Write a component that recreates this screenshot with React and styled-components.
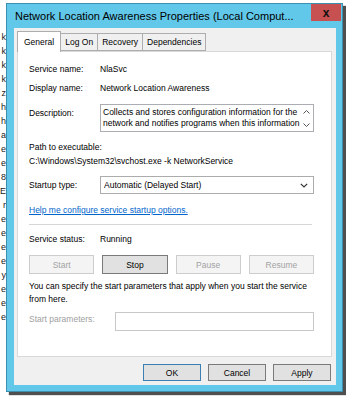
import styled, { createGlobalStyle } from "styled-components";

const Global = createGlobalStyle`
  html, body {
    margin: 0;
    padding: 0;
    background: #ffffff;
  }
  body {
    font-family: "Liberation Sans", Arial, sans-serif;
  }
`;

const Page = styled.div`
  width: 346px;
  height: 396px;
  display: flex;
  align-items: flex-start;
  overflow: hidden;
  background: #ffffff;
`;

const Backdrop = styled.div`
  width: 6px;
  height: 396px;
  overflow: hidden;
  display: flex;
  flex-direction: column;
  align-items: flex-end;
  padding-top: 30px;
  box-sizing: border-box;
  font-size: 9px;
  line-height: 14px;
  color: #222;
`;

const Window = styled.div`
  margin-top: 3px;
  width: 337px;
  height: 389px;
  box-sizing: border-box;
  background: #62c8e9;
  border: 1px solid #3c8fae;
  box-shadow: 3px 3px 1px rgba(20, 20, 20, 0.75);
  display: flex;
  flex-direction: column;
`;

const TitleBar = styled.div`
  height: 24px;
  display: flex;
  justify-content: space-between;
  align-items: flex-start;
  padding-left: 8px;
`;

const Title = styled.div`
  font-size: 11px;
  line-height: 11px;
  padding-top: 7px;
  color: #000;
  white-space: nowrap;
`;

const CloseButton = styled.div`
  width: 30px;
  height: 17px;
  margin-right: 1px;
  background: #c75050;
  display: flex;
  align-items: center;
  justify-content: center;
  font-weight: bold;
  font-size: 12px;
  line-height: 12px;
  color: #111;
`;

const Client = styled.div`
  flex: 1;
  margin: 0 6px 6px 7px;
  background: #f0f0f0;
  display: flex;
  flex-direction: column;
  padding: 3px 3px 0 3px;
  font-size: 8.5px;
  color: #000;
`;

const Tabs = styled.div`
  display: flex;
  align-items: flex-end;
  height: 20px;
`;

const Tab = styled.div`
  height: ${(p) => (p.$active ? "21px" : "18px")};
  box-sizing: border-box;
  padding: 0 ${(p) => (p.$active ? "6px" : "4px")};
  border: 1px solid #adadad;
  border-bottom: ${(p) => (p.$active ? "none" : "1px solid #adadad")};
  background: ${(p) => (p.$active ? "#ffffff" : "#f0f0f0")};
  margin-left: ${(p) => (p.$active ? "0" : "-1px")};
  margin-bottom: ${(p) => (p.$active ? "-1px" : "0")};
  position: relative;
  z-index: ${(p) => (p.$active ? 2 : 1)};
  display: flex;
  align-items: center;
  white-space: nowrap;
`;

const Panel = styled.div`
  width: 315px;
  height: 306px;
  box-sizing: border-box;
  background: #ffffff;
  border: 1px solid #d9d9d9;
  padding: 12px 17px 0 11px;
  display: flex;
  flex-direction: column;
`;

const Row = styled.div`
  display: grid;
  grid-template-columns: ${(p) => p.$label || 71}px 1fr;
  align-items: ${(p) => p.$align || "center"};
  line-height: 11px;
  margin-top: ${(p) => p.$gap || 0}px;
  color: ${(p) => (p.$dim ? "#a0a0a0" : "#000")};
`;

const Line = styled.div`
  line-height: ${(p) => p.$lh || 11}px;
  margin-top: ${(p) => p.$gap || 0}px;
  white-space: nowrap;
`;

const Label = styled.span`
  padding-top: ${(p) => p.$top || 0}px;
  padding-bottom: ${(p) => p.$bottom || 0}px;
`;

const TextBox = styled.div`
  height: 28px;
  box-sizing: border-box;
  border: 1px solid #abadb3;
  display: flex;
  background: #fff;
`;

const TextBody = styled.div`
  flex: 1;
  padding: 2px 0 0 2px;
  line-height: 11px;
  overflow: hidden;
  white-space: nowrap;
`;

const ScrollCol = styled.div`
  width: 13px;
  display: flex;
  flex-direction: column;
  align-items: center;
  justify-content: space-around;
`;

const Select = styled.div`
  height: 18px;
  box-sizing: border-box;
  border: 1px solid #acacac;
  background: #fff;
  display: flex;
  align-items: center;
  justify-content: space-between;
  padding: 0 5px 0 3px;
`;

const Link = styled.a`
  color: #0066cc;
  text-decoration: underline;
  line-height: 11px;
  margin-top: 11px;
  white-space: nowrap;
`;

const Separator = styled.div`
  height: 1px;
  background: #d6d6d6;
  margin: 8px 2px 0 0;
`;

const ButtonRow = styled.div`
  display: grid;
  grid-template-columns: repeat(4, 1fr);
  column-gap: 8px;
  margin-top: 10px;
`;

const Button = styled.div`
  height: ${(p) => p.$h || 19}px;
  box-sizing: border-box;
  border: 1px solid
    ${(p) => (p.$disabled ? "#cdcdcd" : p.$default ? "#3c7fb1" : "#7a7a7a")};
  background: ${(p) => (p.$disabled ? "#f4f4f4" : "#e1e1e1")};
  color: ${(p) => (p.$disabled ? "#a3a3a3" : "#000")};
  display: flex;
  align-items: center;
  justify-content: center;
  width: ${(p) => (p.$w ? p.$w + "px" : "auto")};
`;

const InputBox = styled.div`
  height: 19px;
  box-sizing: border-box;
  border: 1px solid #c8c8c8;
  background: #fff;
`;

const Footer = styled.div`
  display: flex;
  justify-content: flex-end;
  gap: 7px;
  margin-top: 7px;
  padding-right: 2px;
`;

const Chevron = () => (
  <svg width="8" height="5" viewBox="0 0 8 5">
    <path d="M0.8 0.8 L4 4 L7.2 0.8" fill="none" stroke="#333" strokeWidth="1.2" />
  </svg>
);

const Arrow = ({ up }) => (
  <svg width="7" height="4" viewBox="0 0 7 4">
    <path
      d={up ? "M0.5 3.5 L3.5 0.5 L6.5 3.5" : "M0.5 0.5 L3.5 3.5 L6.5 0.5"}
      fill="none"
      stroke="#555"
      strokeWidth="1"
    />
  </svg>
);

const backdropBits = ["k", "k", "k", "k", "z", "h", "h", "a", "e", "e", "8", "E", "r", "e", "e", "e", "e", "y", "e", "e", "e"];

export default function App() {
  return (
    <>
      <Global />
      <Page>
        <Backdrop>
          {backdropBits.map((b, i) => (
            <span key={i}>{b}</span>
          ))}
        </Backdrop>
        <Window>
          <TitleBar>
            <Title>Network Location Awareness Properties (Local Comput...</Title>
            <CloseButton>x</CloseButton>
          </TitleBar>
          <Client>
            <Tabs>
              <Tab $active>General</Tab>
              <Tab>Log On</Tab>
              <Tab>Recovery</Tab>
              <Tab>Dependencies</Tab>
            </Tabs>
            <Panel>
              <Row>
                <span>Service name:</span>
                <span>NlaSvc</span>
              </Row>
              <Row $gap={8}>
                <span>Display name:</span>
                <span>Network Location Awareness</span>
              </Row>
              <Row $gap={10} $align="start">
                <Label $top={4}>Description:</Label>
                <TextBox>
                  <TextBody>
                    Collects and stores configuration information for the
                    <br />
                    network and notifies programs when this information
                  </TextBody>
                  <ScrollCol>
                    <Arrow up />
                    <Arrow />
                  </ScrollCol>
                </TextBox>
              </Row>
              <Line $gap={10}>Path to executable:</Line>
              <Line $gap={3}>C:\Windows\System32\svchost.exe -k NetworkService</Line>
              <Row $gap={9}>
                <span>Startup type:</span>
                <Select>
                  <span>Automatic (Delayed Start)</span>
                  <Chevron />
                </Select>
              </Row>
              <Link>Help me configure service startup options.</Link>
              <Separator />
              <Row $gap={9}>
                <span>Service status:</span>
                <span>Running</span>
              </Row>
              <ButtonRow>
                <Button $disabled>Start</Button>
                <Button>Stop</Button>
                <Button $disabled>Pause</Button>
                <Button $disabled>Resume</Button>
              </ButtonRow>
              <Line $gap={6} $lh={13}>
                You can specify the start parameters that apply when you start the service
              </Line>
              <Line $lh={13}>from here.</Line>
              <Row $gap={6} $dim $label={86}>
                <Label $bottom={4}>Start parameters:</Label>
                <InputBox />
              </Row>
            </Panel>
            <Footer>
              <Button $default $w={58} $h={17}>OK</Button>
              <Button $w={58} $h={17}>Cancel</Button>
              <Button $w={58} $h={17}>Apply</Button>
            </Footer>
          </Client>
        </Window>
      </Page>
    </>
  );
}
